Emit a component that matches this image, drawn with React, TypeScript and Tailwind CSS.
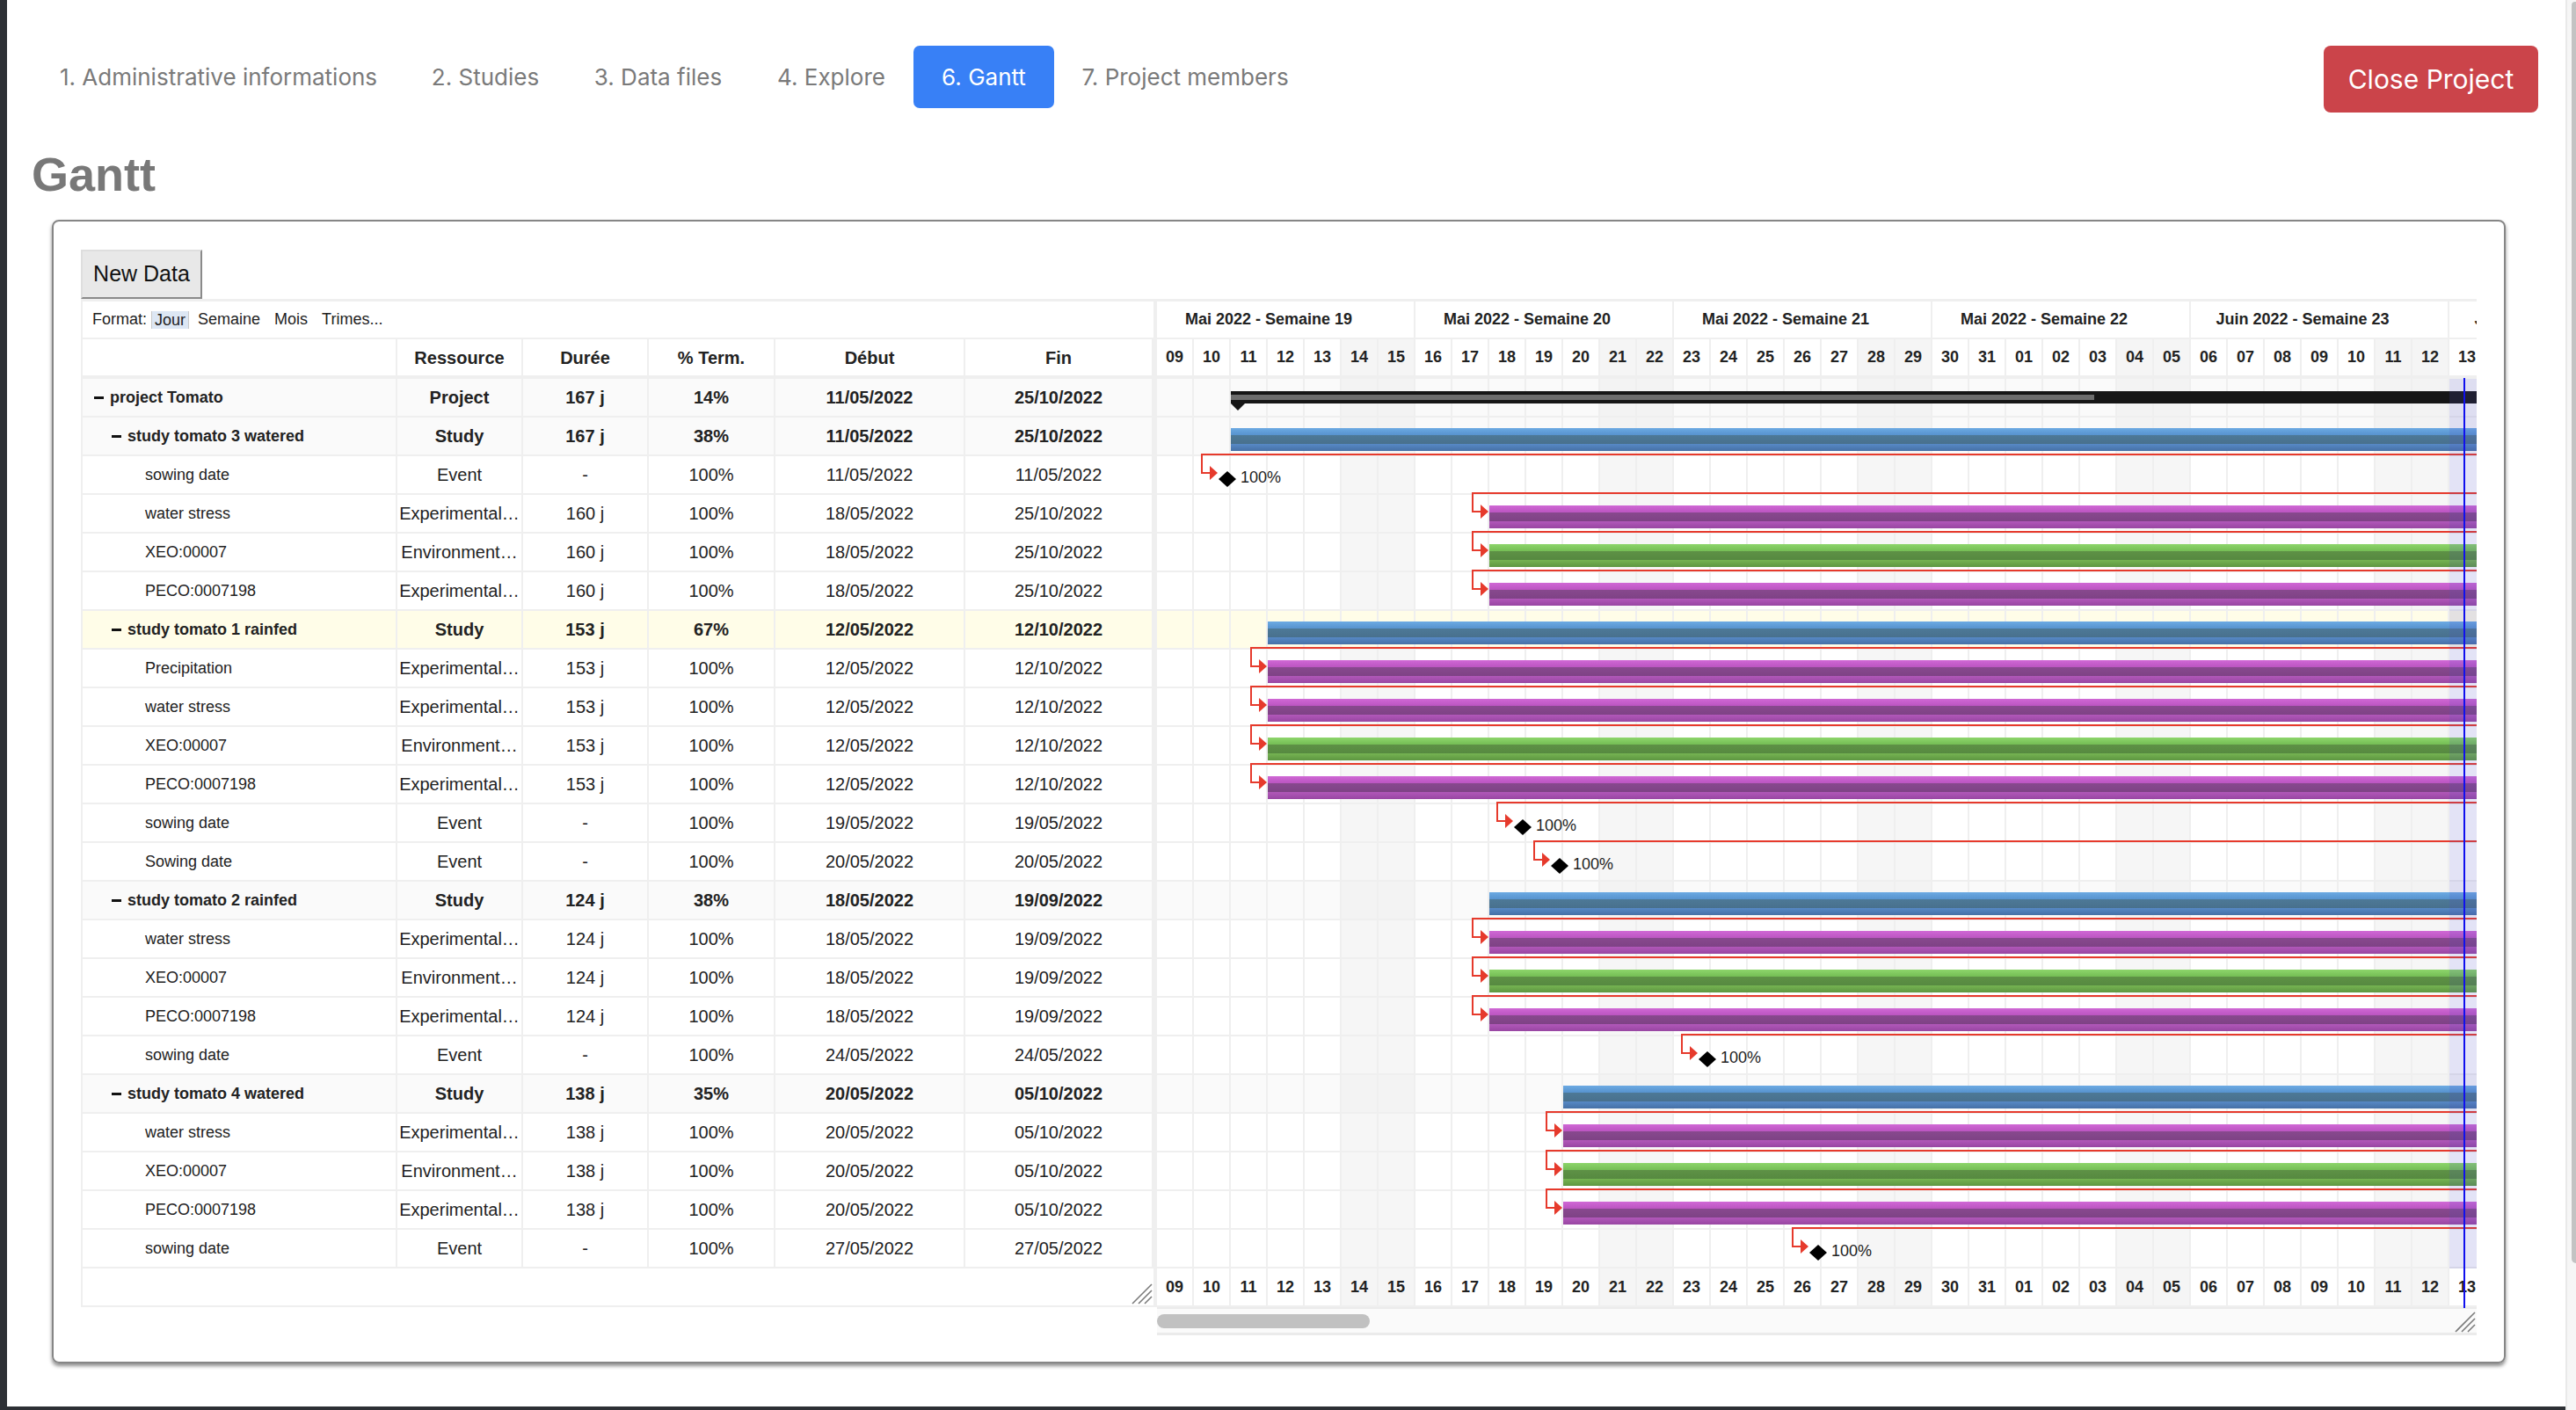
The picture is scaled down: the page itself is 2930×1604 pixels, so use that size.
import React from 'react';

type Kind = 'project' | 'study' | 'milestone' | 'purple' | 'green';

interface Row {
  name: string;
  level: number;
  res: string;
  dur: string;
  pct: string;
  start: string;
  end: string;
  kind: Kind;
  day: number;
  hl?: boolean;
}

const rows: Row[] = [
  { name: 'project Tomato', level: 0, res: 'Project', dur: '167 j', pct: '14%', start: '11/05/2022', end: '25/10/2022', kind: 'project', day: 2 },
  { name: 'study tomato 3 watered', level: 1, res: 'Study', dur: '167 j', pct: '38%', start: '11/05/2022', end: '25/10/2022', kind: 'study', day: 2 },
  { name: 'sowing date', level: 2, res: 'Event', dur: '-', pct: '100%', start: '11/05/2022', end: '11/05/2022', kind: 'milestone', day: 2 },
  { name: 'water stress', level: 2, res: 'Experimental…', dur: '160 j', pct: '100%', start: '18/05/2022', end: '25/10/2022', kind: 'purple', day: 9 },
  { name: 'XEO:00007', level: 2, res: 'Environment…', dur: '160 j', pct: '100%', start: '18/05/2022', end: '25/10/2022', kind: 'green', day: 9 },
  { name: 'PECO:0007198', level: 2, res: 'Experimental…', dur: '160 j', pct: '100%', start: '18/05/2022', end: '25/10/2022', kind: 'purple', day: 9 },
  { name: 'study tomato 1 rainfed', level: 1, res: 'Study', dur: '153 j', pct: '67%', start: '12/05/2022', end: '12/10/2022', kind: 'study', day: 3, hl: true },
  { name: 'Precipitation', level: 2, res: 'Experimental…', dur: '153 j', pct: '100%', start: '12/05/2022', end: '12/10/2022', kind: 'purple', day: 3 },
  { name: 'water stress', level: 2, res: 'Experimental…', dur: '153 j', pct: '100%', start: '12/05/2022', end: '12/10/2022', kind: 'purple', day: 3 },
  { name: 'XEO:00007', level: 2, res: 'Environment…', dur: '153 j', pct: '100%', start: '12/05/2022', end: '12/10/2022', kind: 'green', day: 3 },
  { name: 'PECO:0007198', level: 2, res: 'Experimental…', dur: '153 j', pct: '100%', start: '12/05/2022', end: '12/10/2022', kind: 'purple', day: 3 },
  { name: 'sowing date', level: 2, res: 'Event', dur: '-', pct: '100%', start: '19/05/2022', end: '19/05/2022', kind: 'milestone', day: 10 },
  { name: 'Sowing date', level: 2, res: 'Event', dur: '-', pct: '100%', start: '20/05/2022', end: '20/05/2022', kind: 'milestone', day: 11 },
  { name: 'study tomato 2 rainfed', level: 1, res: 'Study', dur: '124 j', pct: '38%', start: '18/05/2022', end: '19/09/2022', kind: 'study', day: 9 },
  { name: 'water stress', level: 2, res: 'Experimental…', dur: '124 j', pct: '100%', start: '18/05/2022', end: '19/09/2022', kind: 'purple', day: 9 },
  { name: 'XEO:00007', level: 2, res: 'Environment…', dur: '124 j', pct: '100%', start: '18/05/2022', end: '19/09/2022', kind: 'green', day: 9 },
  { name: 'PECO:0007198', level: 2, res: 'Experimental…', dur: '124 j', pct: '100%', start: '18/05/2022', end: '19/09/2022', kind: 'purple', day: 9 },
  { name: 'sowing date', level: 2, res: 'Event', dur: '-', pct: '100%', start: '24/05/2022', end: '24/05/2022', kind: 'milestone', day: 15 },
  { name: 'study tomato 4 watered', level: 1, res: 'Study', dur: '138 j', pct: '35%', start: '20/05/2022', end: '05/10/2022', kind: 'study', day: 11 },
  { name: 'water stress', level: 2, res: 'Experimental…', dur: '138 j', pct: '100%', start: '20/05/2022', end: '05/10/2022', kind: 'purple', day: 11 },
  { name: 'XEO:00007', level: 2, res: 'Environment…', dur: '138 j', pct: '100%', start: '20/05/2022', end: '05/10/2022', kind: 'green', day: 11 },
  { name: 'PECO:0007198', level: 2, res: 'Experimental…', dur: '138 j', pct: '100%', start: '20/05/2022', end: '05/10/2022', kind: 'purple', day: 11 },
  { name: 'sowing date', level: 2, res: 'Event', dur: '-', pct: '100%', start: '27/05/2022', end: '27/05/2022', kind: 'milestone', day: 18 },
];

const DAY_W = 42;
const TODAY = 35;
const days = Array.from({ length: 36 }, (_, i) => String(i < 23 ? 9 + i : i - 22).padStart(2, '0'));
const weeks = [
  'Mai 2022 - Semaine 19',
  'Mai 2022 - Semaine 20',
  'Mai 2022 - Semaine 21',
  'Mai 2022 - Semaine 22',
  'Juin 2022 - Semaine 23',
  'Juin 2022 - Semaine 24',
];
const isWeekend = (i: number) => i % 7 === 5 || i % 7 === 6;
const isGroup = (r: Row) => r.kind === 'project' || r.kind === 'study';

const indent = ['pl-[13px]', 'pl-[33px]', 'pl-[53px]'];

const barBg: Record<string, string> = {
  study:
    'bg-[linear-gradient(to_bottom,#6caae3_0%,#5894cf_29%,#4d7997_30%,#48708d_70%,#5688c4_71%,#4670a6_100%)]',
  purple:
    'bg-[linear-gradient(to_bottom,#d068d5_0%,#bc56c2_29%,#88498e_30%,#7e4285_70%,#b057b8_71%,#9846a2_100%)]',
  green:
    'bg-[linear-gradient(to_bottom,#8dd56b_0%,#76bf56_29%,#5e9146_30%,#568940_70%,#74b251_71%,#5e9641_100%)]',
};

const tabs = [
  { label: '1. Administrative informations', w: 'w-[421px]' },
  { label: '2. Studies', w: 'w-[186px]' },
  { label: '3. Data files', w: 'w-[207px]' },
  { label: '4. Explore', w: 'w-[187px]' },
  { label: '6. Gantt', w: 'w-[160px]', active: true },
  { label: '7. Project members', w: 'w-[298px]' },
];

const RED = '#e63a2c';

const ResizeHandle = () => (
  <svg width="24" height="24" viewBox="0 0 24 24" className="shrink-0">
    <line x1="23" y1="1" x2="1" y2="23" stroke="#7a7a7a" strokeWidth="1.6" />
    <line x1="23" y1="8" x2="8" y2="23" stroke="#7a7a7a" strokeWidth="1.6" />
    <line x1="23" y1="15" x2="15" y2="23" stroke="#7a7a7a" strokeWidth="1.6" />
  </svg>
);

// red finish-to-start link coming in from the right, ending on x
const Link = ({ x }: { x: number }) => (
  <>
    <div className="absolute top-[-3px] h-[2px] w-[1700px]" style={{ left: x - 20, background: RED }} />
    <div className="absolute top-[-3px] h-[23px] w-[2px]" style={{ left: x - 20, background: RED }} />
    <div className="absolute top-[18px] h-[2px] w-[12px]" style={{ left: x - 20, background: RED }} />
    <svg className="absolute top-[11px]" style={{ left: x - 10 }} width="9" height="16" viewBox="0 0 9 16">
      <polygon points="0,0 9,8 0,16" fill={RED} />
    </svg>
  </>
);

function cellBg(r: Row, i: number) {
  if (r.hl) return 'bg-[#fffde8]';
  const g = isGroup(r);
  if (isWeekend(i)) return g ? 'bg-[#f3f3f3]' : 'bg-[#f6f6f6]';
  return g ? 'bg-[#fafafa]' : 'bg-white';
}

function ChartRow({ r }: { r: Row }) {
  const x = r.day * DAY_W;
  return (
    <div className="relative flex h-[44px]">
      {days.map((d, i) => (
        <div key={d + i} className={`h-full w-[42px] shrink-0 border-r-2 border-b-2 border-[#efefef] ${cellBg(r, i)}`} />
      ))}
      {r.kind === 'project' && (
        <>
          <div className="absolute top-[14px] h-[14px] w-[2000px] bg-[#161616]" style={{ left: x }}>
            <div className="absolute left-0 top-[4px] h-[6px] w-[982px] bg-[#6d6d6d]" />
          </div>
          <svg className="absolute top-[28px]" style={{ left: x }} width="16" height="8" viewBox="0 0 16 8">
            <polygon points="0,0 16,0 8,8" fill="#161616" />
          </svg>
        </>
      )}
      {r.kind === 'study' && (
        <div className={`absolute top-[12px] h-[26px] w-[2000px] ${barBg.study}`} style={{ left: x }} />
      )}
      {(r.kind === 'purple' || r.kind === 'green') && (
        <>
          <Link x={x} />
          <div className={`absolute top-[12px] h-[26px] w-[2000px] ${barBg[r.kind]}`} style={{ left: x }} />
        </>
      )}
      {r.kind === 'milestone' && (
        <>
          <Link x={x - 14} />
          <svg className="absolute top-[17px]" style={{ left: x - 14 }} width="20" height="18" viewBox="0 0 20 18">
            <polygon points="10,0 20,9 10,18 0,9" fill="#000" />
          </svg>
          <span className="absolute top-[14px] whitespace-nowrap text-[18px] leading-[20px] text-[#222]" style={{ left: x + 11 }}>
            100%
          </span>
        </>
      )}
    </div>
  );
}

function DayRow({ className }: { className: string }) {
  return (
    <div className={`flex ${className}`}>
      {days.map((d, i) => (
        <div
          key={d + i}
          className={`flex h-full w-[42px] shrink-0 items-center justify-center border-r-2 border-[#efefef] text-[18px] font-bold ${
            isWeekend(i) ? 'bg-[#f5f5f5]' : 'bg-white'
          }`}
        >
          {d}
        </div>
      ))}
    </div>
  );
}

function LeftGrid() {
  const cell = 'flex h-full shrink-0 items-center justify-center border-r-2 border-[#efefef] text-[20px]';
  return (
    <div className="flex w-[1224px] shrink-0 flex-col border-l-2 border-r-4 border-[#efefef]">
      {/* format */}
      <div className="flex h-[43px] items-center border-b-2 border-[#efefef] pl-[11px] text-[18px] text-[#222]">
        <span>Format:</span>
        <span className="ml-[5px] border-x border-[#c9c9c9] bg-[#dde7f4] px-[3px] leading-[20px]">Jour</span>
        <span className="ml-[10px]">Semaine</span>
        <span className="ml-[16px]">Mois</span>
        <span className="ml-[16px]">Trimes...</span>
      </div>
      {/* header */}
      <div className="flex h-[45px] border-b-4 border-[#efefef] font-bold">
        <div className={`${cell} w-[358px]`} />
        <div className={`${cell} w-[143px]`}>Ressource</div>
        <div className={`${cell} w-[143px]`}>Durée</div>
        <div className={`${cell} w-[144px]`}>% Term.</div>
        <div className={`${cell} w-[216px]`}>Début</div>
        <div className={`${cell} w-[214px] border-r-0`}>Fin</div>
      </div>
      {rows.map((r, idx) => {
        const g = isGroup(r);
        const bg = r.hl ? 'bg-[#fffde8]' : g ? 'bg-[#fafafa]' : 'bg-white';
        return (
          <div key={idx} className={`flex h-[44px] border-b-2 border-[#efefef] ${bg} ${g ? 'font-bold' : ''}`}>
            <div className={`flex h-full w-[358px] shrink-0 items-center border-r-2 border-[#efefef] text-[18px] ${indent[r.level]}`}>
              <div className="flex w-[18px] shrink-0 items-center">
                {g && <div className="h-[3px] w-[11px] bg-[#111]" />}
              </div>
              <span className="whitespace-nowrap">{r.name}</span>
            </div>
            <div className={`${cell} w-[143px] overflow-hidden whitespace-nowrap`}>{r.res}</div>
            <div className={`${cell} w-[143px]`}>{r.dur}</div>
            <div className={`${cell} w-[144px]`}>{r.pct}</div>
            <div className={`${cell} w-[216px]`}>{r.start}</div>
            <div className={`${cell} w-[214px] border-r-0`}>{r.end}</div>
          </div>
        );
      })}
      {/* footer */}
      <div className="flex h-[44px] items-end justify-end border-b-2 border-[#efefef] bg-white pb-[1px] pr-[1px]">
        <ResizeHandle />
      </div>
    </div>
  );
}

function Chart() {
  return (
    <div className="w-[1501px] shrink-0 overflow-hidden">
      <div className="w-[1512px]">
        {/* weeks */}
        <div className="flex h-[43px] border-b-2 border-[#efefef]">
          {weeks.map((w) => (
            <div
              key={w}
              className="flex h-full w-[294px] shrink-0 items-center justify-center whitespace-nowrap border-r-2 border-[#efefef] pr-[38px] text-[18px] font-bold"
            >
              {w}
            </div>
          ))}
        </div>
        <DayRow className="h-[45px] border-b-4 border-[#efefef]" />
        <div className="relative">
          {rows.map((r, i) => (
            <ChartRow key={i} r={r} />
          ))}
          <DayRow className="h-[44px] border-b-2 border-[#efefef]" />
          {/* today */}
          <div
            className="absolute top-0 h-[1012px] w-[42px] bg-[rgba(80,80,200,0.16)]"
            style={{ left: TODAY * DAY_W }}
          />
          <div className="absolute bottom-[-1px] top-[-1px] w-[2px] bg-[#1010ee]" style={{ left: TODAY * DAY_W + 16 }} />
        </div>
      </div>
      {/* scrollbar */}
      <div className="flex h-[32px] w-[1501px] items-center border-t-2 border-b-[3px] border-[#ebebeb] bg-[#fafafa]">
        <div className="h-[16px] w-[242px] rounded-full bg-[#c1c1c1]" />
        <div className="ml-auto mr-[1px] flex items-end self-end">
          <ResizeHandle />
        </div>
      </div>
    </div>
  );
}

function Nav() {
  return (
    <nav className="flex items-start justify-between pl-[30px] pr-[31px] pt-[52px] font-['Inter',sans-serif]">
      <div className="flex h-[71px] items-center">
        {tabs.map((t) => (
          <div
            key={t.label}
            className={`flex h-full shrink-0 items-center justify-center whitespace-nowrap rounded-[7px] text-[26px] ${t.w} ${
              t.active ? 'bg-[#3880f6] text-white' : 'text-[#7a7a7a]'
            }`}
          >
            {t.label}
          </div>
        ))}
      </div>
      <button className="flex h-[76px] w-[244px] items-center justify-center rounded-[8px] bg-[#cb444a] text-[30px] text-white">
        Close Project
      </button>
    </nav>
  );
}

export default function App() {
  return (
    <div className="flex h-[1604px] w-[2930px] overflow-hidden bg-white font-['Liberation_Sans',Arial,sans-serif] text-[#222]">
      <div className="flex min-w-0 flex-1 flex-col">
        <div className="flex min-h-0 flex-1">
          <div className="w-[8px] shrink-0 bg-[#2d3035]" />
          <main className="flex min-w-0 flex-1 flex-col bg-white">
            <Nav />
            <h1 className="ml-[28px] mt-[38px] text-[54px] font-bold leading-[64px] text-[#787878]">Gantt</h1>
            <section className="ml-[51px] mr-[68px] mt-[20px] rounded-[8px] border-2 border-[#868686] px-[31px] pb-[30px] pt-[32px] shadow-[0_3px_4px_rgba(0,0,0,0.45)]">
              <button className="flex h-[56px] w-[138px] items-center justify-center border-2 border-b-[#8a8a8a] border-l-[#dedede] border-r-[#8a8a8a] border-t-[#dedede] bg-[#e8e8e8] text-[25px] text-[#111]">
                New Data
              </button>
              <div className="flex items-start border-t-[3px] border-[#efefef]">
                <LeftGrid />
                <Chart />
              </div>
            </section>
          </main>
        </div>
        <div className="h-[4px] shrink-0 bg-[#2d3035]" />
      </div>
      {/* page scrollbar */}
      <div className="flex w-[12px] shrink-0 border-l-2 border-[#e9e9e9] bg-[#f6f6f6]">
        <div className="ml-[5px] mt-[2px] h-[1435px] flex-1 rounded-l-[4px] rounded-bl-[5px] bg-[#c3c3c3]" />
      </div>
    </div>
  );
}
